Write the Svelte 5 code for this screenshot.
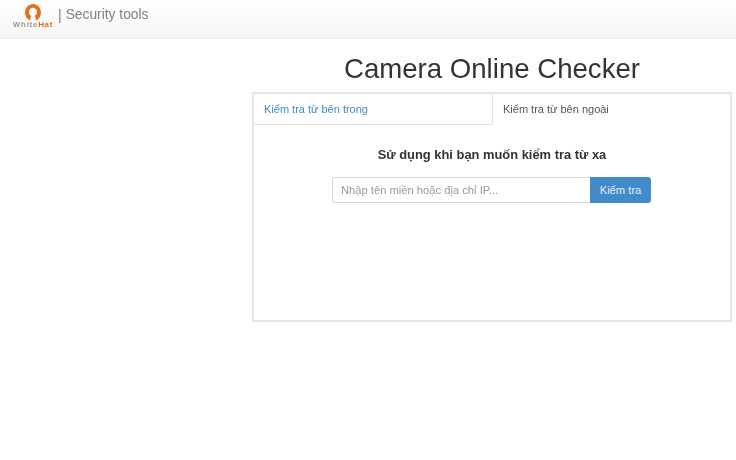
<script>
    let domain = '';
</script>

<div class="page">
    <nav class="navbar">
        <a class="brand" href="#top">
            <svg class="logo-mark" width="18" height="19" viewBox="0 0 18 19">
                <path d="M6.2 17.5 C6 15 6.6 14 7.4 13 C5.6 12 5 10.6 5 9 C5 6.6 6.8 4.8 9 4.8 C11.2 4.8 13 6.6 13 9 C13 10.6 12.4 12 10.6 13 C11.4 14 12 15 11.8 17.5 C15 16.2 17 13 17 9.4 C17 4.8 13.4 1 9 1 C4.6 1 1 4.8 1 9.4 C1 13 3 16.2 6.2 17.5 Z" fill="#e2711d"/>
            </svg>
            <span class="logo-text">White<b>Hat</b></span>
        </a>
        <span class="sep">|</span>
        <span class="tagline">Security tools</span>
    </nav>

    <main class="content">
        <div class="side"></div>
        <section class="checker">
            <h1>Camera Online Checker</h1>
            <div class="panel">
                <ul class="tabs">
                    <li class="tab"><a href="#inside">Kiểm tra từ bên trong</a></li>
                    <li class="tab active"><span>Kiểm tra từ bên ngoài</span></li>
                </ul>
                <div class="pane">
                    <h2>Sử dụng khi bạn muốn kiểm tra từ xa</h2>
                    <form class="search" on:submit|preventDefault>
                        <input type="text" bind:value={domain} placeholder="Nhập tên miền hoặc địa chỉ IP..." />
                        <button type="submit">Kiểm tra</button>
                    </form>
                </div>
            </div>
        </section>
    </main>
</div>

<style>
    :global(body) {
        margin: 0;
        background: #fff;
        font-family: "Liberation Sans", Arial, sans-serif;
    }

    .page {
        width: 736px;
        height: 460px;
        overflow: hidden;
        filter: blur(0.6px);
    }

    .navbar {
        box-sizing: border-box;
        height: 39px;
        padding: 0 0 0 11px;
        display: flex;
        align-items: center;
        background: linear-gradient(to bottom, #fff, #f6f6f6);
        border-bottom: 1px solid #ececec;
        color: #808080;
    }

    .brand {
        width: 44px;
        height: 30px;
        margin-top: -7px;
        display: flex;
        flex-direction: column;
        align-items: center;
        text-decoration: none;
    }

    .logo-mark {
        margin-top: 2px;
    }

    .logo-text {
        font-size: 8px;
        line-height: 7px;
        margin-top: -1px;
        font-weight: bold;
        letter-spacing: 0.7px;
        color: #999;
    }

    .logo-text b {
        color: #e2711d;
    }

    .sep {
        margin-left: 3px;
        margin-top: -9px;
        font-size: 14px;
    }

    .tagline {
        margin-left: 4px;
        margin-top: -9px;
        font-size: 13.8px;
    }

    .content {
        display: flex;
    }

    .side {
        width: 252px;
    }

    .checker {
        width: 480px;
    }

    h1 {
        margin: 14px 0 0;
        height: 39px;
        font-size: 27.6px;
        line-height: 32px;
        font-weight: 400;
        text-align: center;
        color: #333;
    }

    .panel {
        box-sizing: border-box;
        height: 230px;
        border: 2px solid #e6e6e6;
    }

    .tabs {
        display: grid;
        grid-template-columns: 1fr 1fr;
        margin: 0;
        padding: 0;
        list-style: none;
    }

    .tab {
        box-sizing: border-box;
        height: 31px;
        padding: 0 10px;
        font-size: 11px;
        line-height: 31px;
        border-bottom: 1px solid #e2e2e2;
    }

    .tab a {
        color: #428bca;
        text-decoration: none;
    }

    .tab.active {
        color: #555;
        border-left: 1px solid #e2e2e2;
        border-bottom-color: transparent;
    }

    .pane {
        display: flex;
        flex-direction: column;
        align-items: center;
    }

    h2 {
        margin: 21px 0 0;
        font-size: 12.9px;
        line-height: 18px;
        font-weight: bold;
        color: #333;
    }

    .search {
        display: flex;
        margin: 13px 1px 0 0;
    }

    input {
        box-sizing: border-box;
        width: 258px;
        height: 26px;
        padding: 0 8px;
        font: 11.2px "Liberation Sans", Arial, sans-serif;
        border: 1px solid #d8d8d8;
        border-right: 0;
        border-radius: 3px 0 0 3px;
        outline: none;
    }

    input::placeholder {
        color: #999;
    }

    button {
        box-sizing: border-box;
        width: 61px;
        height: 26px;
        padding: 0;
        font: 11.2px "Liberation Sans", Arial, sans-serif;
        color: #e4eef8;
        background: #428bca;
        border: 1px solid #428bca;
        border-radius: 0 3px 3px 0;
    }
</style>
